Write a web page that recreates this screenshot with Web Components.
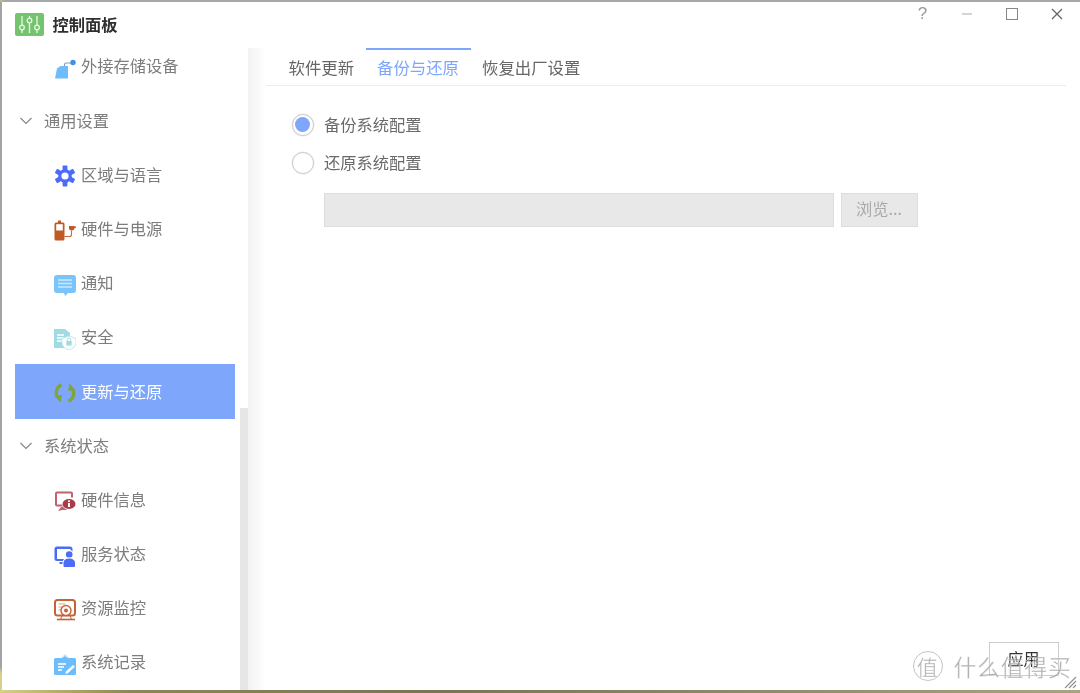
<!DOCTYPE html>
<html><head><meta charset="utf-8"><style>
html,body{margin:0;height:100%;background:#fff;overflow:hidden}
body{font-family:"Noto Sans CJK SC","Noto Sans",sans-serif}
</style></head><body>
<cp-window>
  <cp-titlebar slot="title">控制面板</cp-titlebar>
  <cp-sidebar slot="side">
    <cp-item kind="usb">外接存储设备</cp-item>
    <cp-group>通用设置</cp-group>
    <cp-item kind="gear">区域与语言</cp-item>
    <cp-item kind="power">硬件与电源</cp-item>
    <cp-item kind="note">通知</cp-item>
    <cp-item kind="safe">安全</cp-item>
    <cp-item kind="sync" selected>更新与还原</cp-item>
    <cp-group>系统状态</cp-group>
    <cp-item kind="info">硬件信息</cp-item>
    <cp-item kind="user">服务状态</cp-item>
    <cp-item kind="mon">资源监控</cp-item>
    <cp-item kind="log">系统记录</cp-item>
  </cp-sidebar>
  <cp-content slot="main"></cp-content>
</cp-window>
<script>
function def(name, css, html, init){
  customElements.define(name, class extends HTMLElement{
    constructor(){super();const r=this.attachShadow({mode:'open'});r.innerHTML='<style>'+css+'</style>'+html;}
    connectedCallback(){init&&init.call(this,this.shadowRoot)}
  });
}
const ICONS={
usb:'<path d="M1 21.500 3 11.500 6.500 9H14v12.500z" fill="#6dbcfb"/><path d="M10.500 9V7.500Q10.500 6 12.500 6H17" fill="none" stroke="#8a9bb0" stroke-width="1.200"/><circle cx="19" cy="5.500" r="2.700" fill="#3f8ff0"/>',
gear:'<g fill="#4a6cf7"><circle cx="11" cy="11" r="6.800"/><rect x="8.600" y="0.500" width="4.800" height="21" rx=".8"/><rect x="8.600" y="0.500" width="4.800" height="21" rx=".8" transform="rotate(60 11 11)"/><rect x="8.600" y="0.500" width="4.800" height="21" rx=".8" transform="rotate(120 11 11)"/></g><circle cx="11" cy="11" r="3.600" fill="#fff"/>',
power:'<path d="M2 3.500h2V1.500h3v2h2a1.500 1.500 0 0 1 1.500 1.500v15a1.500 1.500 0 0 1-1.500 1.500H2A1.500 1.500 0 0 1 .5 20V5A1.500 1.500 0 0 1 2 3.500z" fill="#bf5a25"/><rect x="2.200" y="5.200" width="6.600" height="6.300" fill="#fff"/><path d="M10.500 17.500h5q2 0 2-2v-4" fill="none" stroke="#c8693a" stroke-width="1.100"/><path d="M15 7h5.500v2.500q0 2-2.700 2T15 9.500z" fill="#bf5a25"/><rect x="20" y="7.500" width="2" height="1.400" fill="#bf5a25"/>',
note:'<path d="M3 1h16a3 3 0 0 1 3 3v12a3 3 0 0 1-3 3h-5l-3 3-1-3H3a3 3 0 0 1-3-3V4a3 3 0 0 1 3-3z" fill="#79c5fb"/><path d="M4 6h14M4 9.500h14M4 13h14" stroke="#c9e8fd" stroke-width="1.300"/>',
safe:'<path d="M0 1h11l5 4v15H0z" fill="#9fdbe0"/><path d="M3 7h7M3 10h7M3 13h5" stroke="#fff" stroke-width="1.300"/><path d="M15 8l7 2.500V15q0 4.500-7 7-7-2.500-7-7v-4.500z" fill="#fff" stroke="#bfe7ea" stroke-width="1"/><rect x="12.300" y="13" width="5.400" height="4.500" rx=".6" fill="#9fdbe0"/><path d="M13.300 13v-1.300a1.700 1.700 0 0 1 3.400 0V13" fill="none" stroke="#9fdbe0" stroke-width="1"/>',
sync:'<g fill="none" stroke="#7ea63a" stroke-width="3.400"><path d="M7.500 2.800A8.500 8.500 0 0 0 3.500 15"/><path d="M14.500 19.200A8.500 8.500 0 0 0 18.500 7"/></g><path d="M.5 14 8 13 6.500 20.500z" fill="#7ea63a"/><path d="M21.500 8 14 9 15.500 1.500z" fill="#7ea63a"/>',
info:'<path d="M3 1.500h14A2 2 0 0 1 19 3.500v4h-2v-4H3v11h6v2H3a2 2 0 0 1-2-2v-11a2 2 0 0 1 2-2z" fill="#c1616c"/><path d="M4 21 7 17h5l1 3H8z" fill="#c1616c"/><ellipse cx="15" cy="14" rx="7" ry="5.600" fill="#fff"/><ellipse cx="15" cy="14" rx="6.500" ry="5" fill="#a83c48"/><rect x="14" y="13" width="2" height="4" fill="#fff"/><rect x="14" y="10.400" width="2" height="1.600" fill="#fff"/>',
user:'<path d="M3 1.500h13a2.500 2.500 0 0 1 2.500 2.500v5h-2V4H3v10h7v2H3a2.500 2.500 0 0 1-2.500-2.500V4A2.500 2.500 0 0 1 3 1.500z" fill="#4a6cf7"/><path d="M5.500 17h5.500v2H5.500z" fill="#4a6cf7"/><circle cx="15.200" cy="9.500" r="4.500" fill="#fff"/><circle cx="15.200" cy="9.500" r="3.300" fill="#4a6cf7"/><path d="M8.500 22v-4q0-5.500 6.700-5.500T22 18v4z" fill="#fff"/><path d="M9.500 21v-3q0-4.500 5.700-4.500t5.800 4.500v3a1 1 0 0 1-1 1H10.500a1 1 0 0 1-1-1z" fill="#4a6cf7"/>',
mon:'<rect x="1" y="1" width="20" height="15.500" rx="2.500" fill="#fff" stroke="#c4623a" stroke-width="2"/><path d="M4.500 5h7M4.500 8h4M4.500 11h3" stroke="#e0a58c" stroke-width="1.100"/><circle cx="12" cy="11.500" r="5" fill="#fff" stroke="#c4623a" stroke-width="1.400"/><circle cx="12" cy="11.500" r="2" fill="#c4623a"/><path d="M3 20.500h18" stroke="#c4623a" stroke-width="1.600"/><path d="M8 16.500 6.500 20.500M16 16.500l1.500 4" stroke="#c4623a"/>',
log:'<path d="M1.500 5H7l4-3.500L15 5h5.500A1.500 1.500 0 0 1 22 6.500V20.500A1.500 1.500 0 0 1 20.500 22h-19A1.500 1.500 0 0 1 0 20.500V6.500A1.500 1.500 0 0 1 1.500 5z" fill="#6dbcfb"/><path d="M7.500 5 11 2.500 14.500 5" fill="none" stroke="#fff" stroke-width=".8"/><path d="M4 11h8M4 14h6M4 17h4" stroke="#fff" stroke-width="1.300"/><path d="M12 18.500l7-6.500 1.800 1.800-7 6.500-2.500.7z" fill="#fff"/>'
};
def('cp-window',`
:host{display:flex;flex-direction:column;width:1080px;height:693px;box-sizing:border-box;position:relative;filter:blur(.4px)}
.top{height:1.500px;background:linear-gradient(90deg,#c9b98a 0,#a8a8a8 4px,#a8a8a8 100%)}
.body{flex:1;min-height:0;display:flex;flex-direction:column;border-left:2.500px solid;border-image:linear-gradient(180deg,#a3a3a3 0,#a3a3a3 96.500%,#d9cf8c 97.500%,#d9cf8c 100%) 1;background:#fff}
.row{flex:1;min-height:0;display:flex}
.foot{height:3.500px;background:linear-gradient(90deg,#d9cf8c 0,#b9ae6c 5%,#8d8658 12%,#7a7550 40%,#8f8a68 70%,#a9a47c 100%)}
`,`<div class="top"></div><div class="body"><slot name="title"></slot><div class="row"><slot name="side"></slot><slot name="main"></slot></div></div><div class="foot"></div>`);
def('cp-titlebar',`
:host{display:flex;align-items:center;height:46.500px;flex:none;padding-left:12.500px;color:#2f2f2f;font-size:16.300px;font-weight:700}
.logo{width:29px;height:23px;background:#74c46f;border-radius:2px;display:flex;align-items:center;justify-content:center;margin-right:9px}
.t{margin-bottom:2px}
.sp{flex:1}
.ctl{display:flex;align-items:center;height:28px;margin-top:-21px;padding-right:1px;color:#888;font-weight:400}
.ctl>*{display:flex;width:44.700px;justify-content:center}
.q{font:400 17px "Liberation Sans",sans-serif;color:#999}
`,`<span class="logo"><svg width="23" height="19" viewBox="0 0 23 19" fill="none" stroke="#e9f7e6" stroke-width="1.300"><path d="M4 1v9M4 15v3M11.500 1v2M11.500 8v10M19 1v9M19 15v3"/><circle cx="4" cy="12.500" r="2.300"/><circle cx="11.500" cy="5.500" r="2.300"/><circle cx="19" cy="12.500" r="2.300"/></svg></span><span class="t"><slot></slot></span><span class="sp"></span>
<span class="ctl"><span class="q">?</span><span><svg width="12" height="2"><path d="M1 1h10" stroke="#aaa" stroke-width="1"/></svg></span><span><svg width="12" height="12"><rect x=".5" y=".5" width="11" height="11" fill="none" stroke="#888"/></svg></span><span><svg width="12" height="12"><path d="M1 1l10 10M11 1 1 11" stroke="#666" stroke-width="1.300"/></svg></span></span>`);
def('cp-sidebar',`
:host{display:block;width:245.500px;flex:none;position:relative;overflow:hidden;background:#fff}
.list{margin-top:-8.700px;padding-left:12.500px;width:220px}
.track{position:absolute;right:0;top:0;bottom:0;width:8px;background:#fff}
.thumb{position:absolute;left:0;right:0;top:360px;bottom:0;background:#e6e6e6}
`,`<div class="list"><slot></slot></div><div class="track"><div class="thumb"></div></div>`);
def('cp-group',`
:host{display:flex;align-items:center;height:54.200px;padding:0 0 2px 4px;box-sizing:border-box;color:#7d7d7d;font-size:16.300px}
svg{margin:2px 11.500px 0 0;flex:none}
`,`<svg width="14" height="8" viewBox="0 0 14 8"><path d="M1.500 1 7 6.500 12.500 1" fill="none" stroke="#888" stroke-width="1.200"/></svg><slot></slot>`);
def('cp-item',`
:host{display:flex;align-items:center;height:54.200px;padding:0 0 2px 39px;color:#7d7d7d;font-size:16.300px;box-sizing:border-box}
:host([selected]){background:#7ea6fb;color:#fff}
svg{width:22px;height:22px;margin:5px 5.400px 0 0;flex:none}
`,`<svg viewBox="0 0 22 22"></svg><slot></slot>`,function(r){r.querySelector('svg').innerHTML=ICONS[this.getAttribute('kind')]||''});
def('cp-tab',`
:host{display:flex;align-items:center;justify-content:center;height:34.500px;padding:0 11.500px 3.500px;box-sizing:content-box;font-size:16.400px;color:#666;border-top:2px solid transparent;margin-top:-.5px}
:host([active]){color:#7ea6fb;border-top-color:#7ea6fb}
`,`<slot></slot>`);
def('cp-radio',`
:host{display:flex;align-items:center;height:38px;padding-bottom:2px;box-sizing:border-box;color:#6a6a6a;font-size:16.300px}
i{width:20px;height:20px;border:1px solid #ccc;border-radius:50%;margin:2px 10.400px 0 0;display:flex;align-items:center;justify-content:center;background:#fff;box-shadow:0 0 0 .5px #eee}
:host([checked]) i::after{content:"";width:15px;height:15px;border-radius:50%;background:#7ea6fb}
`,`<i></i><slot></slot>`);
def('cp-browse',`
:host{display:flex;gap:7px;padding-left:32px;margin-top:11px}
.in{width:510px;height:34.500px;box-sizing:border-box;background:#e8e8e8;border:1px solid #ddd}
.btn{width:77px;height:34.500px;padding-bottom:3px;box-sizing:border-box;background:#e8e8e8;border:1px solid #ddd;color:#a9a9a9;font-size:16.300px;display:flex;align-items:center;justify-content:center}
`,`<div class="in"></div><div class="btn">浏览...</div>`);
def('cp-content',`
:host{display:flex;flex-direction:column;flex:1;min-width:0;position:relative;background:linear-gradient(90deg,#f2f2f2 0,#fff 18px,#fff 100%)}
.tabs{display:flex;width:800px;height:38px;box-sizing:border-box;padding-left:11.500px;border-bottom:1px solid #ececec;margin-left:18px;background:#fff}
.pane{padding:19.500px 0 0 26px;margin-left:18px;flex:1;background:#fff}
.apply{position:absolute;left:741px;top:594px;width:70px;height:34px;padding-bottom:2px;box-sizing:border-box;border:1px solid #ccc;background:#fff;color:#333;font-size:16px;display:flex;align-items:center;justify-content:center}
.wm{position:absolute;left:665px;top:603px;display:flex;align-items:center;gap:11px;color:rgba(130,130,130,.62);font-size:23px;line-height:30px;letter-spacing:.6px;-webkit-text-stroke:.5px rgba(255,255,255,.7)}
.wm b{width:28px;height:28px;border:1px solid rgba(170,170,170,.7);border-radius:50%;display:flex;align-items:center;justify-content:center;font-weight:400;font-size:21px}
.grip{position:absolute;right:3px;bottom:1px}
`,`<div class="tabs"><cp-tab>软件更新</cp-tab><cp-tab active>备份与还原</cp-tab><cp-tab>恢复出厂设置</cp-tab></div>
<div class="pane"><cp-radio checked>备份系统配置</cp-radio><cp-radio>还原系统配置</cp-radio><cp-browse></cp-browse></div>
<div class="apply">应用</div>
<div class="wm"><b>值</b><span>什么值得买</span></div>
<svg class="grip" width="13" height="13" viewBox="0 0 13 13"><path d="M1 12 12 1M5 12l7-7M9 12l3-3" stroke="#8c8c8c" stroke-width="1.100"/></svg>`);
</script>
</body></html>
